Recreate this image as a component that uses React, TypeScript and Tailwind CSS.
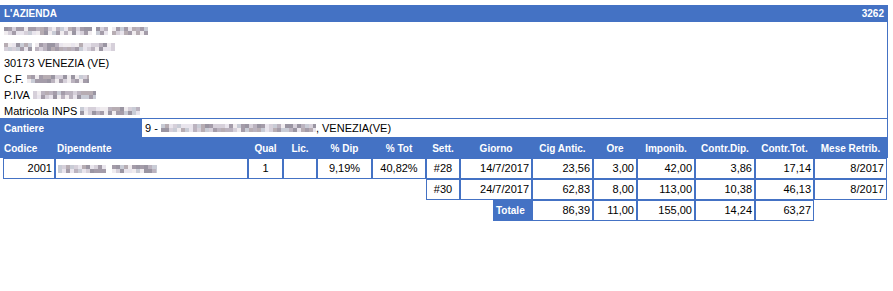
import React from "react";

const cols =
    "grid grid-cols-[55px_193px_35px_34px_55px_54px_34px_72px_61px_44px_58px_60px_59px_73px]";
const cell = "border border-[#4472c4] h-[21px] flex items-center px-[2px] text-[11px] text-black";

// pixelated placeholder for the blurred (anonymised) text
function Mosaic({ width, seed }: { width: number; seed: number }) {
    const shades = ["#d6d0da", "#bbb3bf", "#a49ca9", "#e9e5ed", "#9a95a2", "#c9ccd6", "#f0ecef", "#b7adb3"];
    const n = Math.ceil(width / 4);
    const rows = [0, 1];
    return (
        <span className="inline-flex flex-col align-middle" style={{ width }}>
            {rows.map((r) => (
                <span key={r} className="flex h-[4px] overflow-hidden">
                    {Array.from({ length: n }).map((_, i) => {
                        const h = Math.abs(Math.sin((i + 1) * 12.9898 + (r + 1) * 78.233 + seed * 37.719) * 43758.5453);
                        const k = Math.floor((h - Math.floor(h)) * shades.length);
                        return (
                            <span
                                key={i}
                                className="h-full w-[4px] shrink-0"
                                style={{ background: shades[k] }}
                            />
                        );
                    })}
                </span>
            ))}
        </span>
    );
}

export default function App() {
    return (
        <div
            className="w-[893px] h-[291px] bg-white pt-[5px]"
            style={{ fontFamily: '"Liberation Sans", Arial, sans-serif' }}
        >
            <div className="w-[888px]">
                {/* company header */}
                <div className="h-[17px] bg-[#4472c4] flex items-center justify-between pl-[4px] pr-[4px] text-white font-bold text-[10px]">
                    <span>L'AZIENDA</span>
                    <span>3262</span>
                </div>
                <div className="border-r border-[#4472c4] pl-[4px] text-[11px] leading-[16px] text-black h-[96px] pt-[1px]">
                    <div className="h-[16px] flex items-center gap-[4px]">
                        <Mosaic width={88} seed={1} />
                        <Mosaic width={12} seed={2} />
                        <Mosaic width={36} seed={3} />
                    </div>
                    <div className="h-[16px] flex items-center gap-[3px]">
                        <Mosaic width={28} seed={4} />
                        <Mosaic width={80} seed={5} />
                    </div>
                    <div className="h-[16px]">30173 VENEZIA (VE)</div>
                    <div className="h-[16px] flex items-center">
                        C.F.&nbsp;<Mosaic width={62} seed={6} />
                    </div>
                    <div className="h-[16px] flex items-center">
                        P.IVA&nbsp;<Mosaic width={63} seed={7} />
                    </div>
                    <div className="h-[16px] flex items-center">
                        Matricola INPS&nbsp;<Mosaic width={60} seed={8} />
                    </div>
                </div>

                {/* cantiere */}
                <div className="flex h-[20px] bg-[#4472c4]">
                    <div className="w-[141px] flex items-center pl-[4px] text-white font-bold text-[10px]">
                        Cantiere
                    </div>
                    <div className="flex-1 bg-white border border-[#4472c4] flex items-center pl-[3px] text-[11px] text-black">
                        9 -&nbsp;<Mosaic width={155} seed={9} />, VENEZIA(VE)
                    </div>
                </div>

                {/* table header */}
                <div className={`${cols} h-[20px] bg-[#4472c4] text-white font-bold text-[10px] items-center`}>
                    <div className="pl-[4px]">Codice</div>
                    <div className="pl-[2px]">Dipendente</div>
                    <div className="text-center">Qual</div>
                    <div className="text-center">Lic.</div>
                    <div className="text-center">% Dip</div>
                    <div className="text-center">% Tot</div>
                    <div className="text-center">Sett.</div>
                    <div className="text-center">Giorno</div>
                    <div className="text-center">Cig Antic.</div>
                    <div className="text-center">Ore</div>
                    <div className="text-center">Imponib.</div>
                    <div className="text-center">Contr.Dip.</div>
                    <div className="text-center">Contr.Tot.</div>
                    <div className="text-center">Mese Retrib.</div>
                </div>

                {/* row 1 */}
                <div className={cols}>
                    <div className={`${cell} ml-[3px] justify-end`}>2001</div>
                    <div className={`${cell} gap-[6px]`}>
                        <Mosaic width={48} seed={10} />
                        <Mosaic width={45} seed={11} />
                    </div>
                    <div className={`${cell} justify-center`}>1</div>
                    <div className={cell}></div>
                    <div className={`${cell} justify-center`}>9,19%</div>
                    <div className={`${cell} justify-center`}>40,82%</div>
                    <div className={`${cell} justify-center`}>#28</div>
                    <div className={`${cell} justify-end`}>14/7/2017</div>
                    <div className={`${cell} justify-end`}>23,56</div>
                    <div className={`${cell} justify-end`}>3,00</div>
                    <div className={`${cell} justify-end`}>42,00</div>
                    <div className={`${cell} justify-end`}>3,86</div>
                    <div className={`${cell} justify-end`}>17,14</div>
                    <div className={`${cell} justify-end`}>8/2017</div>
                </div>

                {/* row 2 */}
                <div className={cols}>
                    <div className={`${cell} col-start-7 justify-center`}>#30</div>
                    <div className={`${cell} justify-end`}>24/7/2017</div>
                    <div className={`${cell} justify-end`}>62,83</div>
                    <div className={`${cell} justify-end`}>8,00</div>
                    <div className={`${cell} justify-end`}>113,00</div>
                    <div className={`${cell} justify-end`}>10,38</div>
                    <div className={`${cell} justify-end`}>46,13</div>
                    <div className={`${cell} justify-end`}>8/2017</div>
                </div>

                {/* totals */}
                <div className={cols}>
                    <div className="col-start-8 flex justify-end h-[21px]">
                        <div className="w-[39px] bg-[#4472c4] text-white font-bold text-[10px] flex items-center pl-[3px]">
                            Totale
                        </div>
                    </div>
                    <div className={`${cell} justify-end`}>86,39</div>
                    <div className={`${cell} justify-end`}>11,00</div>
                    <div className={`${cell} justify-end`}>155,00</div>
                    <div className={`${cell} justify-end`}>14,24</div>
                    <div className={`${cell} justify-end`}>63,27</div>
                </div>
            </div>
        </div>
    );
}
